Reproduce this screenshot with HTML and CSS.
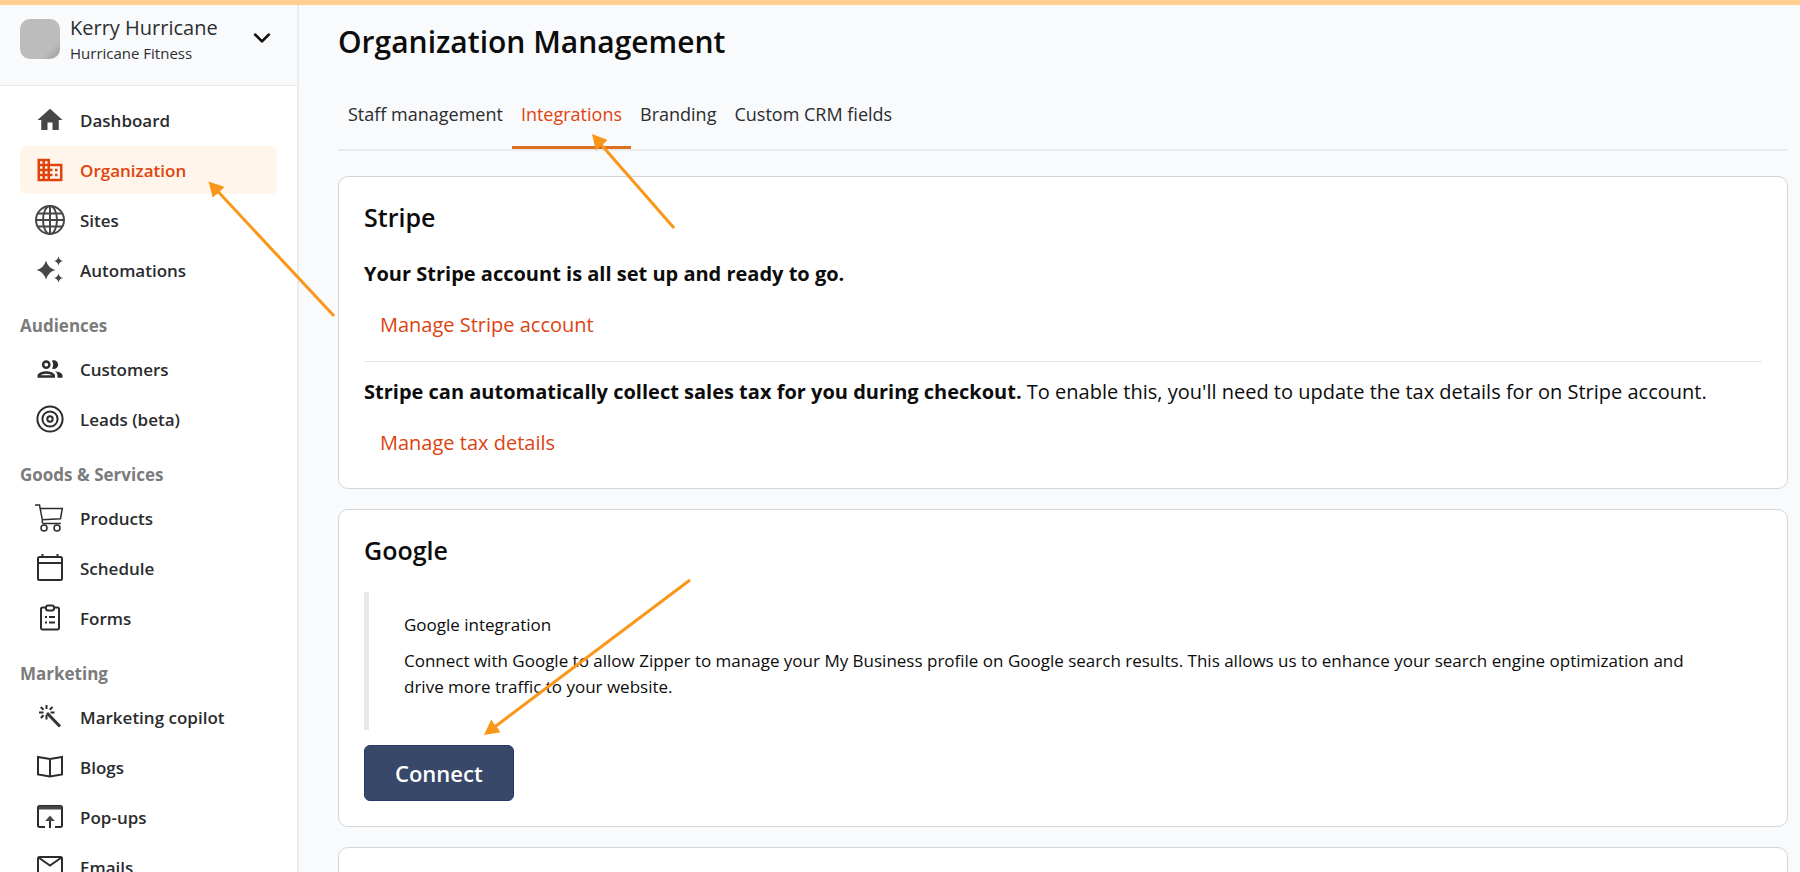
FILE: index.html
```
<!DOCTYPE html>
<html lang="en">
<head>
    <meta charset="UTF-8">
    <meta name="viewport" content="width=device-width, initial-scale=1.0">
    <title>Organization Management</title>
    <link rel="stylesheet" href="styles.css">
</head>
<body>

<div class="layout">

    <!-- Sidebar -->
    <aside class="sidebar">
        <button class="account" type="button">
            <span class="avatar"></span>
            <span class="account-text">
                <span class="account-name">Kerry Hurricane</span>
                <span class="account-org">Hurricane Fitness</span>
            </span>
            <svg class="chevron" viewBox="0 0 16 16"><path d="M2 5l6 6 6-6"/></svg>
        </button>

        <nav class="nav">
            <a class="nav-item" href="#dashboard">
                <svg class="icon solid soft" viewBox="0 0 24 24"><path d="M10 20v-6h4v6h5v-8h3L12 3 2 12h3v8z"/></svg>
                Dashboard
            </a>
            <a class="nav-item active" href="#organization">
                <svg class="icon solid" viewBox="0 0 24 24"><path d="M12 7V3H2v18h20V7H12zM6 19H4v-2h2v2zm0-4H4v-2h2v2zm0-4H4V9h2v2zm0-4H4V5h2v2zm4 12H8v-2h2v2zm0-4H8v-2h2v2zm0-4H8V9h2v2zm0-4H8V5h2v2zm10 12h-8v-2h2v-2h-2v-2h2v-2h-2V9h8v10zm-2-8h-2v2h2v-2zm0 4h-2v2h2v-2z"/></svg>
                Organization
            </a>
            <a class="nav-item" href="#sites">
                <svg class="icon thick soft" viewBox="0 0 30 30"><circle cx="15" cy="15" r="14"/><ellipse cx="15" cy="15" rx="7" ry="14"/><path d="M15 1v28M1 15h28M3 8.500h24M3 21.500h24"/></svg>
                Sites
            </a>
            <a class="nav-item" href="#automations">
                <svg class="icon solid soft" viewBox="0 0 30 30"><path d="M11 5.500Q13 13 20.500 15Q13 17 11 24.500Q9 17 1.500 15Q9 13 11 5.500zM23.500 1.500Q24.300 5.200 28 6Q24.300 6.800 23.500 10.500Q22.700 6.800 19 6Q22.700 5.200 23.500 1.500zM23.500 18.500Q24.300 22.200 28 23Q24.300 23.800 23.500 27.500Q22.700 23.800 19 23Q22.700 22.200 23.500 18.500z"/></svg>
                Automations
            </a>

            <h2 class="nav-heading">Audiences</h2>
            <a class="nav-item" href="#customers">
                <svg class="icon solid" viewBox="0 0 24 24"><path d="M9 13.750c-2.340 0-7 1.170-7 3.500V19h14v-1.750c0-2.330-4.660-3.500-7-3.500zM4.340 17c.84-.58 2.870-1.250 4.660-1.250s3.820.67 4.660 1.250H4.340zM9 12c1.930 0 3.500-1.570 3.500-3.500S10.930 5 9 5 5.500 6.570 5.500 8.500 7.070 12 9 12zm0-5c.83 0 1.500.67 1.500 1.500S9.830 10 9 10s-1.500-.67-1.500-1.500S8.170 7 9 7zm7.040 6.810c1.160.84 1.960 1.960 1.960 3.440V19h4v-1.750c0-2.020-3.500-3.170-5.960-3.440zM15 12c1.930 0 3.500-1.570 3.500-3.500S16.930 5 15 5c-.54 0-1.040.13-1.500.35.63.89 1 1.980 1 3.150s-.37 2.260-1 3.150c.46.22.96.35 1.500.35z"/></svg>
                Customers
            </a>
            <a class="nav-item" href="#leads">
                <svg class="icon thick" viewBox="0 0 30 30"><circle cx="15" cy="15" r="12.600"/><circle cx="15" cy="15" r="7.600"/><circle cx="15" cy="15" r="2.700"/></svg>
                Leads (beta)
            </a>

            <h2 class="nav-heading">Goods &amp; Services</h2>
            <a class="nav-item" href="#products">
                <svg class="icon" viewBox="0 0 30 30"><path d="M0 2h4.500l2.800 14.500v3.500M5 5.500h22.300l-1.800 10.200-18.200 1M7.300 20.500h18.500"/><circle cx="9" cy="25" r="3"/><circle cx="22" cy="25" r="3"/></svg>
                Products
            </a>
            <a class="nav-item" href="#schedule">
                <svg class="icon thick" viewBox="0 0 30 30"><path d="M4.500 4h21a1.500 1.500 0 0 1 1.500 1.500v20a1.500 1.500 0 0 1-1.500 1.500h-21A1.500 1.500 0 0 1 3 25.500v-20A1.500 1.500 0 0 1 4.500 4zM3 10h24M7.500 4V1M22.500 4V1"/></svg>
                Schedule
            </a>
            <a class="nav-item" href="#forms">
                <svg class="icon thick" viewBox="0 0 30 30"><path d="M10.500 4.500h-3A1.500 1.500 0 0 0 6 6v19a1.500 1.500 0 0 0 1.500 1.500h15A1.500 1.500 0 0 0 24 25V6a1.500 1.500 0 0 0-1.500-1.500h-3"/><rect x="11" y="2.500" width="8" height="5" rx="2"/><path d="M10 14h2M14 14h6M10 19.500h2M14 19.500h6"/></svg>
                Forms
            </a>

            <h2 class="nav-heading">Marketing</h2>
            <a class="nav-item" href="#copilot">
                <svg class="icon thick" viewBox="0 0 30 30"><path d="M11.500 3v4M11.500 13v4.500M4 10.500h4.500M15.500 10.500h4M5.800 5l2.700 2.700M17.500 5l-2.700 2.700M5.800 16l2.700-2.700"/><path class="wand" d="M12 11l13 13.500"/></svg>
                Marketing copilot
            </a>
            <a class="nav-item" href="#blogs">
                <svg class="icon thick" viewBox="0 0 30 30"><path d="M15 7L3 5v17.500L15 24.500l12-2V5zM15 7v17.500"/></svg>
                Blogs
            </a>
            <a class="nav-item" href="#popups">
                <svg class="icon thick" viewBox="0 0 30 30"><path d="M10 25H4.500A1.500 1.500 0 0 1 3 23.500v-18A1.500 1.500 0 0 1 4.500 4h21A1.500 1.500 0 0 1 27 5.500v18a1.500 1.500 0 0 1-1.500 1.500H20M15 26V16"/><path class="fill" d="M3.500 4h23v3.500h-23zM15 13.500l4.800 5.500h-9.600z"/></svg>
                Pop-ups
            </a>
            <a class="nav-item" href="#emails">
                <svg class="icon thick" viewBox="0 0 30 30"><rect x="3" y="5" width="24" height="20" rx="1.500"/><path d="M3.500 5.500L15 13.500l11.500-8"/></svg>
                Emails
            </a>
        </nav>
    </aside>

    <!-- Main content -->
    <main class="main">
        <h1 class="page-title">Organization Management</h1>

        <nav class="tabs">
            <a class="tab" href="#staff">Staff management</a>
            <a class="tab active" href="#integrations">Integrations</a>
            <a class="tab" href="#branding">Branding</a>
            <a class="tab" href="#crm">Custom CRM fields</a>
        </nav>

        <section class="card">
            <h2 class="card-title">Stripe</h2>
            <p class="card-text"><strong>Your Stripe account is all set up and ready to go.</strong></p>
            <a class="text-link" href="#stripe-account">Manage Stripe account</a>
            <hr class="divider">
            <p class="card-text"><strong>Stripe can automatically collect sales tax for you during checkout.</strong> To enable this, you'll need to update the tax details for on Stripe account.</p>
            <a class="text-link" href="#stripe-tax">Manage tax details</a>
        </section>

        <section class="card">
            <h2 class="card-title">Google</h2>
            <blockquote class="note">
                <p>Google integration</p>
                <p>Connect with Google to allow Zipper to manage your My Business profile on Google search results. This allows us to enhance your search engine optimization and drive more traffic to your website.</p>
            </blockquote>
            <button class="connect" type="button">Connect</button>
        </section>

        <section class="card card-empty"></section>
    </main>
</div>

<!-- Guide arrows drawn over the page -->
<svg class="arrows" width="1800" height="872" viewBox="0 0 1800 872">
    <defs>
        <marker id="head" viewBox="0 0 15 16" refX="15" refY="8" markerWidth="15" markerHeight="16" markerUnits="userSpaceOnUse" orient="auto">
            <path d="M0 0l15 8-15 8z"/>
        </marker>
    </defs>
    <path d="M334 316L218 191.600"/>
    <path d="M674 228L598 141"/>
    <path d="M690 580L492 729"/>
    <path class="tip" d="M334 316L208.500 181.500"/>
    <path class="tip" d="M674 228L592 134"/>
    <path class="tip" d="M690 580L484 735"/>
</svg>

</body>
</html>
```
FILE: styles.css
```
* {
    box-sizing: border-box;
}
body {
    margin: 0;
    font-family: "Open Sans", "Noto Sans", sans-serif;
    color: #0c0c0c;
    background: #f9fafc;
}
a {
    text-decoration: none;
}
.layout {
    display: flex;
    height: 100vh;
    border-top: 5px solid #ffcd8e;
    overflow: hidden;
}

/* Sidebar */
.sidebar {
    flex: 0 0 299px;
    background: #fff;
    border-right: 2px solid #eaecee;
    overflow: hidden;
}
.account {
    display: flex;
    align-items: flex-start;
    width: 100%;
    height: 81px;
    padding: 9px 26px 0 20px;
    border: 0;
    border-bottom: 1px solid #e6e8ea;
    background: #f9fafc;
    font-family: inherit;
    text-align: left;
    color: #2c2e30;
}
.avatar {
    width: 40px;
    height: 40px;
    margin-top: 5px;
    border-radius: 10px;
    background: linear-gradient(135deg, #bcbcbc 75%, #a8a8a8 90%);
}
.account-text {
    display: flex;
    flex-direction: column;
    flex: 1;
    margin-left: 10px;
}
.account-name {
    font-size: 20px;
    line-height: 28px;
}
.account-org {
    font-size: 15px;
    line-height: 22px;
}
.chevron {
    width: 18px;
    height: 18px;
    margin-top: 15px;
    fill: none;
    stroke: #111;
    stroke-width: 2.5;
    stroke-linecap: round;
    stroke-linejoin: round;
}
.nav {
    padding: 10px 20px;
}
.nav-item {
    display: flex;
    align-items: center;
    gap: 15px;
    height: 48px;
    margin: 0 0 2px;
    padding: 0 15px;
    border-radius: 6px;
    font-size: 17px;
    font-weight: 600;
    color: #2a2c2e;
}
.nav-item.active {
    background: #fff5ea;
    color: #e0440e;
}
.nav-heading {
    margin: 0;
    padding: 18px 0 7px;
    font-size: 17px;
    line-height: 24px;
    font-weight: 700;
    color: #7b7b7b;
}
.icon {
    flex: none;
    width: 30px;
    height: 30px;
    fill: none;
    stroke: currentColor;
    stroke-width: 1.5;
}
.icon.thick {
    stroke-width: 2;
}
.icon.solid {
    fill: currentColor;
    stroke: none;
}
.icon.soft {
    color: #454748;
}
.icon .fill {
    fill: #454748;
    stroke: none;
}
.icon .wand {
    stroke: #333;
    stroke-width: 3;
}

/* Main */
.main {
    flex: 1;
    min-width: 0;
    padding: 16px 12px 0 39px;
    overflow: hidden;
}
.page-title {
    margin: 0;
    font-size: 30px;
    line-height: 42px;
    font-weight: 600;
}
.tabs {
    display: flex;
    margin: 24px 0 25px;
    padding-left: 1px;
    border-bottom: 2px solid #e9ebed;
}
.tab {
    padding: 15px 9px 20px;
    font-size: 18px;
    line-height: 24px;
    border-bottom: 3px solid transparent;
    color: #2a2c2e;
}
.tab.active {
    color: #e0440e;
    border-bottom-color: #dc6f22;
}
.card {
    margin-bottom: 20px;
    padding: 22px 25px 25px;
    border: 1px solid #d3d6d9;
    border-radius: 10px;
    background: #fff;
}
.card-title {
    margin: 0;
    font-size: 25px;
    line-height: 36px;
    font-weight: 600;
}
.card-text {
    margin: 0;
    font-size: 20px;
    line-height: 30px;
}
.card-title + .card-text {
    margin-top: 24px;
}
.text-link {
    display: block;
    width: fit-content;
    margin-top: 16px;
    padding: 10px 16px;
    font-size: 20px;
    line-height: 20px;
    color: #dd4312;
}
.divider {
    margin: 16px 0 15px;
    border: 0;
    border-top: 1px solid #e4e6e8;
}
.note {
    margin: 24px 0 15px;
    padding: 20px 40px 20px 35px;
    border-left: 5px solid #e8e9ea;
    font-size: 17px;
    line-height: 26px;
}
.note p {
    margin: 0 0 10px;
}
.connect {
    display: block;
    padding: 10px 30px;
    border: 1px solid #27386a;
    border-radius: 6px;
    background: #374869;
    color: #fff;
    font-family: inherit;
    font-size: 22px;
    line-height: 34px;
    font-weight: 600;
}
.card-empty {
    min-height: 120px;
}

/* Guide arrows */
.arrows {
    position: absolute;
    top: 0;
    left: 0;
    fill: none;
    stroke: #fa9619;
    stroke-width: 3;
    pointer-events: none;
}
.arrows marker path {
    fill: #fa9619;
    stroke: none;
}
.arrows .tip {
    stroke: none;
    marker-end: url(#head);
}
```
